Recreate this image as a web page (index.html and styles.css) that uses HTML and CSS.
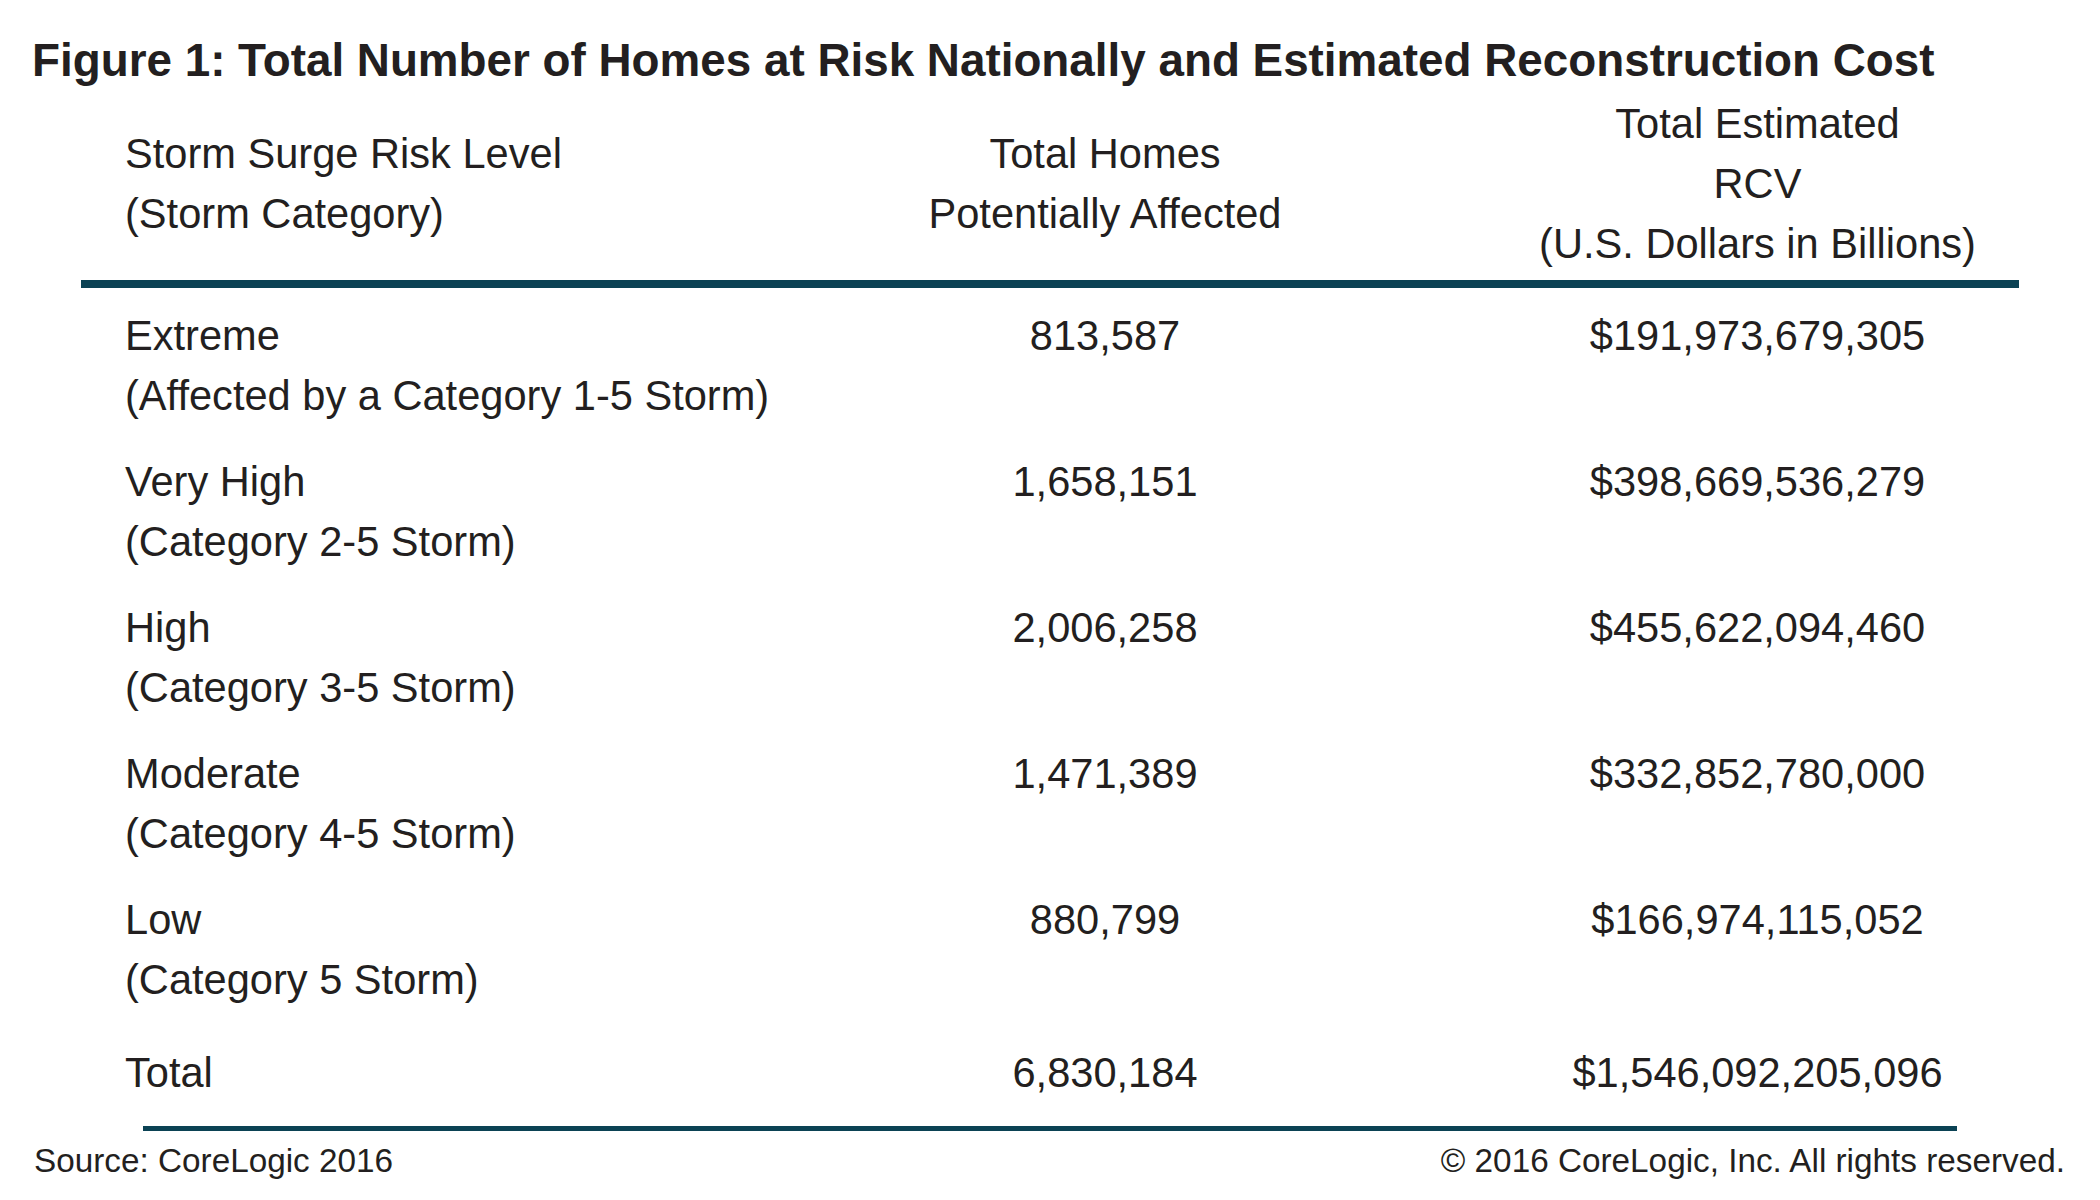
FILE: index.html
```html
<!DOCTYPE html>
<html lang="en">
<head>
<meta charset="utf-8">
<title>Figure 1</title>
<link rel="stylesheet" href="styles.css">
</head>
<body>
<div class="figure">
  <h1 class="title">Figure 1: Total Number of Homes at Risk Nationally and Estimated Reconstruction Cost</h1>
  <div class="table">
    <div class="row head">
      <div class="cell c1 mid"><div>Storm Surge Risk Level</div><div>(Storm Category)</div></div>
      <div class="cell c2 mid"><div>Total Homes</div><div>Potentially Affected</div></div>
      <div class="cell c3"><div>Total Estimated</div><div>RCV</div><div>(U.S. Dollars in Billions)</div></div>
    </div>
    <div class="rule-top"></div>
    <div class="rows">
      <div class="row">
        <div class="cell c1"><div>Extreme</div><div>(Affected by a Category 1-5 Storm)</div></div>
        <div class="cell c2">813,587</div>
        <div class="cell c3">$191,973,679,305</div>
      </div>
      <div class="row">
        <div class="cell c1"><div>Very High</div><div>(Category 2-5 Storm)</div></div>
        <div class="cell c2">1,658,151</div>
        <div class="cell c3">$398,669,536,279</div>
      </div>
      <div class="row">
        <div class="cell c1"><div>High</div><div>(Category 3-5 Storm)</div></div>
        <div class="cell c2">2,006,258</div>
        <div class="cell c3">$455,622,094,460</div>
      </div>
      <div class="row">
        <div class="cell c1"><div>Moderate</div><div>(Category 4-5 Storm)</div></div>
        <div class="cell c2">1,471,389</div>
        <div class="cell c3">$332,852,780,000</div>
      </div>
      <div class="row">
        <div class="cell c1"><div>Low</div><div>(Category 5 Storm)</div></div>
        <div class="cell c2">880,799</div>
        <div class="cell c3">$166,974,115,052</div>
      </div>
      <div class="row total">
        <div class="cell c1">Total</div>
        <div class="cell c2">6,830,184</div>
        <div class="cell c3">$1,546,092,205,096</div>
      </div>
    </div>
  </div>
  <div class="rule-bottom"></div>
  <div class="footer">
    <span>Source: CoreLogic 2016</span>
    <span>© 2016 CoreLogic, Inc. All rights reserved.</span>
  </div>
</div>
</body>
</html>
```
FILE: styles.css
```css
html, body {
  margin: 0;
  padding: 0;
  background: #ffffff;
}

body {
  width: 2100px;
  height: 1200px;
  overflow: hidden;
  font-family: "Liberation Sans", Arial, Helvetica, sans-serif;
  color: #231f20;
}

.figure {
  padding-top: 33px;
}

.title {
  margin: 0 0 0 32px;
  font-size: 45.8px;
  font-weight: bold;
  line-height: 56px;
  white-space: nowrap;
}

.table {
  margin: 5px 0 0 81px;
  width: 1938px;
  font-size: 41.6px;
  line-height: 60px;
}

.row {
  display: grid;
  grid-template-columns: 633px 782px 523px;
}

.cell {
  white-space: nowrap;
}

.c1 {
  padding-left: 44px;
}

.c2, .c3 {
  text-align: center;
}

.mid {
  align-self: center;
}

.rule-top {
  margin-top: 6px;
  height: 8px;
  background: #0b4254;
}

.rows {
  margin-top: 18px;
  display: flex;
  flex-direction: column;
  gap: 26px;
}

.row.total {
  margin-top: 7px;
}

.rule-bottom {
  margin: 23px 0 0 143px;
  width: 1814px;
  height: 5px;
  background: #0b4254;
}

.footer {
  margin-top: 10px;
  padding: 0 35px 0 34px;
  display: flex;
  justify-content: space-between;
  font-size: 33.3px;
  line-height: 40px;
}
```
